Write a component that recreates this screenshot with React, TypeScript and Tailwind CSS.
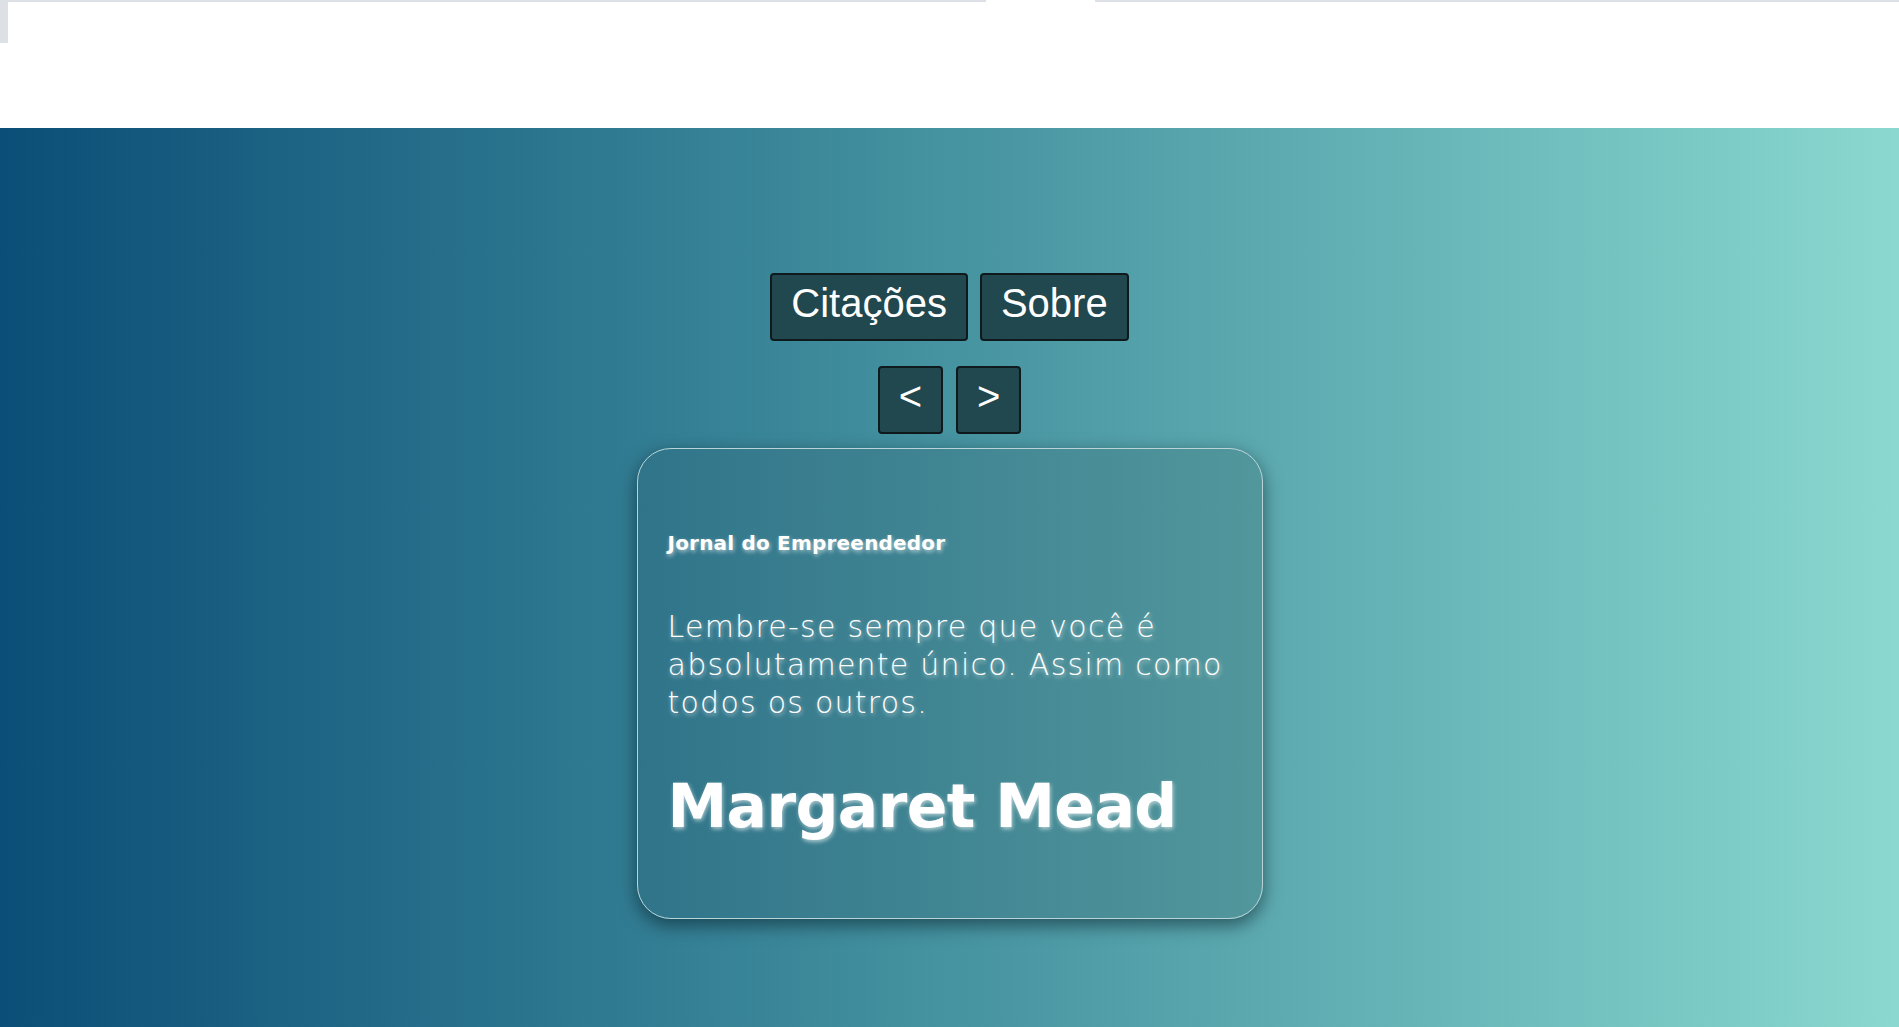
import React from "react";

function NavButton({ children }: { children: React.ReactNode }) {
  return (
    <button className="rounded-[4px] border-2 border-[#0f1a1c] bg-[#22484f] px-[19px] pb-[13px] pt-[5px] font-['Liberation_Sans',Arial,sans-serif] text-[40px] leading-[46px] text-white">
      {children}
    </button>
  );
}

export default function App() {
  return (
    <div className="flex h-[1027px] w-full flex-col overflow-hidden bg-white">
      {/* top bar */}
      <header className="flex h-[128px] shrink-0 items-start bg-white">
        <div className="h-[43px] w-[8px] bg-[#dde1e6]" />
        <div className="flex h-[2px] flex-1">
          <div className="w-[978px] bg-[#dde1e6]" />
          <div className="w-[109px]" />
          <div className="flex-1 bg-[#dde1e6]" />
        </div>
      </header>

      <main className="flex flex-1 flex-col items-center bg-[linear-gradient(to_right,#0b4e77,#3f8c9c_45%,#8ad8cf)] pt-[145px]">
        <div className="flex gap-[12px]">
          <NavButton>Citações</NavButton>
          <NavButton>Sobre</NavButton>
        </div>
        <div className="mt-[25px] flex gap-[13px]">
          <NavButton>&lt;</NavButton>
          <NavButton>&gt;</NavButton>
        </div>

        <article className="mt-[14px] flex h-[471px] w-[626px] flex-col rounded-[34px] border border-[#b8d4d8] bg-[linear-gradient(to_right,#30748a,#52979c)] px-[30px] pt-[82px] font-['DejaVu_Sans','Open_Sans',sans-serif] text-white shadow-[0_6px_18px_rgba(0,20,30,0.55)] [text-shadow:1px_2px_4px_rgba(255,255,255,0.6)]">
          <h3 className="text-[20px] font-bold leading-[24px] tracking-[0.2px]">Jornal do Empreendedor</h3>
          <p className="mt-[53px] text-[30px] font-light leading-[38px] tracking-[1.25px]">
            Lembre-se sempre que você é
            <br />
            absolutamente único. Assim como
            <br />
            todos os outros.
          </p>
          <h2 className="mt-[48px] whitespace-nowrap text-[60px] font-bold leading-[72px] tracking-[-0.6px]">Margaret Mead</h2>
        </article>
      </main>
    </div>
  );
}
